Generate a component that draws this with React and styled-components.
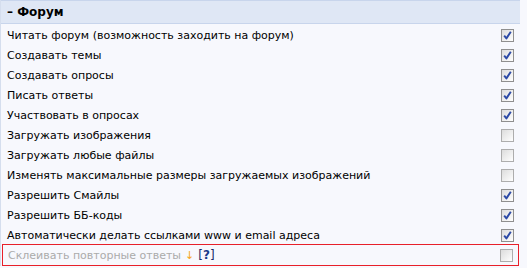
import React from "react";
import styled, { createGlobalStyle } from "styled-components";

const Global = createGlobalStyle`
  html, body { margin: 0; padding: 0; background: #f7f8fd; }
  body { font-family: Tahoma, "DejaVu Sans", Verdana, sans-serif; }
`;

const Panel = styled.div`
  width: 519px;
  border-left: 1px solid #d5deee;
  background: #f7f8fd;
`;

const Header = styled.div`
  height: 22px;
  display: flex;
  align-items: center;
  padding-left: 6px;
  background: #dfe7f5;
  border-top: 1px solid #c8d5ec;
  border-bottom: 1px solid #c8d5ec;
  font-size: 12px;
  font-weight: bold;
  color: #000;
`;

const List = styled.div`
  display: flex;
  flex-direction: column;
  padding-top: 1px;
`;

const Row = styled.label`
  box-sizing: border-box;
  height: 20px;
  display: flex;
  align-items: center;
  justify-content: space-between;
  padding: 0 6px 0 6px;
  font-size: 11px;
  color: ${(p) => (p.$disabled ? "#ababab" : "#000")};
  ${(p) =>
    p.$highlight &&
    `
    height: 22px;
    margin: -1px 0 0 1px;
    width: 517px;
    padding-left: 5px;
    padding-right: 5px;
    border: 1px solid #e8202a;
  `}
`;

const Box = styled.span`
  box-sizing: border-box;
  width: 13px;
  height: 13px;
  border: 1px solid #8f8f8f;
  background: linear-gradient(135deg, #dcdcdc 0%, #f4f4f4 70%, #ffffff 100%);
  display: flex;
  align-items: center;
  justify-content: center;
  border-color: ${(p) => (p.$checked ? "#8f8f8f" : "#adadad")};
`;

const Arrow = styled.span`
  color: #f5a623;
  margin-left: 4px;
`;

const Help = styled.span`
  color: #1a2a6a;
  margin-left: 4px;
  font-size: 12px;
  b { color: #1a3a8a; }
`;

const Check = () => (
  <svg width="9" height="9" viewBox="0 0 9 9">
    <path d="M1.2 4.6 L3.4 7.4 L7.8 0.8" stroke="#2c4aa6" strokeWidth="1.9" fill="none" strokeLinejoin="round" />
  </svg>
);

const items = [
  ["Читать форум (возможность заходить на форум)", true],
  ["Создавать темы", true],
  ["Создавать опросы", true],
  ["Писать ответы", true],
  ["Участвовать в опросах", true],
  ["Загружать изображения", false],
  ["Загружать любые файлы", false],
  ["Изменять максимальные размеры загружаемых изображений", false],
  ["Разрешить Смайлы", true],
  ["Разрешить ББ-коды", true],
  ["Автоматически делать ссылками www и email адреса", true],
];

export default function App() {
  return (
    <>
      <Global />
      <Panel>
        <Header>– Форум</Header>
        <List>
          {items.map(([t, c]) => (
            <Row key={t}>
              <span>{t}</span>
              <Box $checked={c}>{c && <Check />}</Box>
            </Row>
          ))}
          <Row $disabled $highlight>
            <span>
              Склеивать повторные ответы
              <Arrow>↓</Arrow>
              <Help>
                [<b>?</b>]
              </Help>
            </span>
            <Box />
          </Row>
        </List>
      </Panel>
    </>
  );
}
